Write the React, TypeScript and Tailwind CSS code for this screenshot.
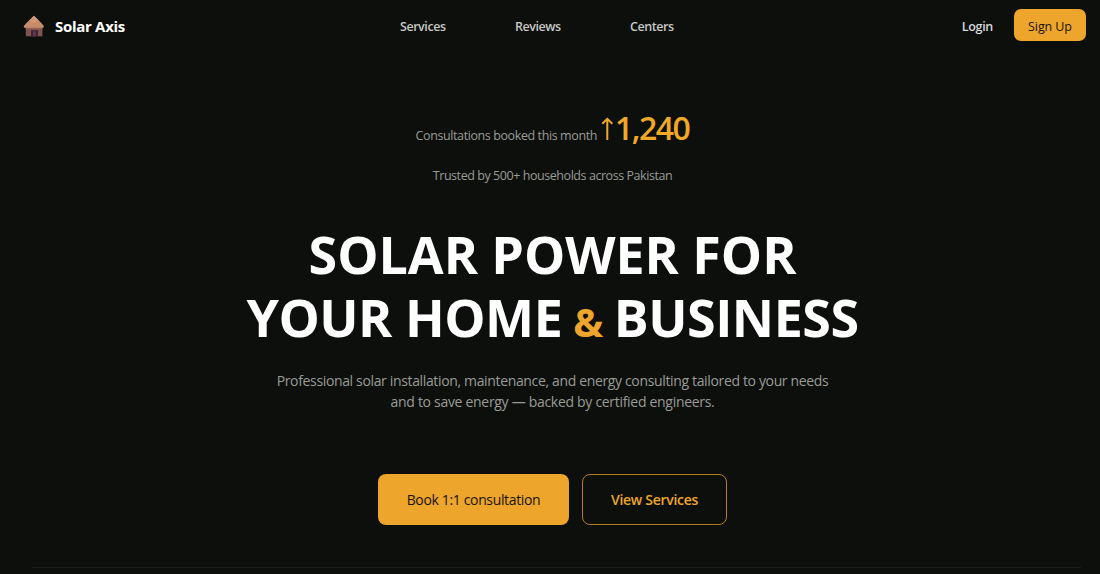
import React from "react";

const navLinks = [
    { label: "Services", href: "#services" },
    { label: "Reviews", href: "#reviews" },
    { label: "Centers", href: "#centers" },
];

export default function App() {
    return (
        <div className="h-[574px] w-[1100px] overflow-hidden bg-[#0d0f0c] font-['Open_Sans','Noto_Sans',sans-serif] text-white">
            <Navbar />
            <Hero />
            <hr className="ml-8 w-[1049px] border-[#1b1d1a]" />
        </div>
    );
}

function Navbar() {
    return (
        <header className="flex h-[52px] items-center pl-[23px] pr-[14px] whitespace-nowrap">
            <a href="#" className="flex w-[377px] items-center gap-[10px]">
                <HutIcon className="h-[22px] w-[22px]" />
                <span className="text-[15px] font-bold tracking-[-0.3px]">Solar Axis</span>
            </a>

            <nav className="grid grid-cols-[115px_115px_60px] pt-[2px] text-[12.5px] font-semibold tracking-[-0.45px] text-[#c6c8c5]">
                {navLinks.map((link) => (
                    <a key={link.label} href={link.href}>
                        {link.label}
                    </a>
                ))}
            </nav>

            <div className="mb-[2px] ml-auto flex items-center gap-[21px] text-[12.5px]">
                <a href="#login" className="pt-[4px] font-semibold tracking-[-0.3px] text-[#d6d7dc]">Login</a>
                <button className="h-8 w-[72px] rounded-[7px] bg-[#eea52b] pt-[4px] font-medium tracking-[-0.1px] text-[#17130a]">
                    Sign Up
                </button>
            </div>
        </header>
    );
}

function Hero() {
    return (
        <section className="flex h-[515px] flex-col items-center pl-[5px] text-center whitespace-nowrap">
            {/* Booking stats */}
            <p className="mt-[52px] flex h-12 items-baseline gap-1 leading-[48px] text-[#999b97]">
                <span className="text-[12.5px] tracking-[-0.4px]">Consultations booked this month</span>
                <span className="flex items-baseline text-[32px] font-semibold tracking-[-1.5px] text-[#f0a827]">
                    <ArrowUp className="mr-px h-[23px] w-[13px]" />
                    1,240
                </span>
            </p>
            <p className="mt-[14px] text-[12.5px] leading-5 tracking-[-0.44px] text-[#999b97]">
                Trusted by 500+ households across Pakistan
            </p>

            <h1 className="mt-[36px] flex flex-col items-center text-[52px] leading-[63px] font-bold">
                <span className="tracking-[-0.05px]">SOLAR POWER FOR</span>
                <span className="flex items-baseline gap-[11px] tracking-[-0.5px]">
                    <span>YOUR HOME</span>
                    <span className="text-[40px] text-[#eea52b]">&amp;</span>
                    <span>BUSINESS</span>
                </span>
            </h1>

            <p className="mt-[17px] text-[14px] leading-[21px] tracking-[-0.35px] text-[#999b97]">
                Professional solar installation, maintenance, and energy consulting tailored to your needs
                <br />
                <span className="tracking-[-0.3px]">and to save energy — backed by certified engineers.</span>
            </p>

            <div className="mt-[62px] flex gap-[13px] text-[14px]">
                <button className="h-[51px] w-[191px] rounded-lg bg-[#eea52b] font-medium tracking-[-0.35px] text-[#17130a]">
                    Book 1:1 consultation
                </button>
                <button className="h-[51px] w-[145px] rounded-lg border border-[#b57d20] font-semibold tracking-[-0.3px] text-[#eea52b]">
                    View Services
                </button>
            </div>
        </section>
    );
}

function ArrowUp(props: React.SVGProps<SVGSVGElement>) {
    return (
        <svg {...props} viewBox="0 0 13 23" fill="none" stroke="currentColor" strokeWidth="2">
            <path d="M6.3 23V2M1.3 6.8 6.3 1.8l5 5" />
        </svg>
    );
}

function HutIcon(props: React.SVGProps<SVGSVGElement>) {
    return (
        <svg {...props} viewBox="0 0 22 22">
            <path d="M2.8 11h16.6v10.3H2.8z" fill="#80534f" />
            <path d="M2.8 11h16.6v3.2H2.8z" fill="#966052" />
            <path d="M8 15.2h7v6.1H8z" fill="#3f2439" />
            <path d="M10 16.2h2.8v5.1H10z" fill="#5f3a50" />
            <path d="M11 .8c2.8 2.8 7 6.5 10 10.5l-.7 1.5H1.2L.7 11.3C3.7 7.3 8.2 3.6 11 .8z" fill="#c58d69" />
            <path d="M11 .8 15.500 5.200 11 8 6.500 5.200z" fill="#cf9972" />
        </svg>
    );
}
